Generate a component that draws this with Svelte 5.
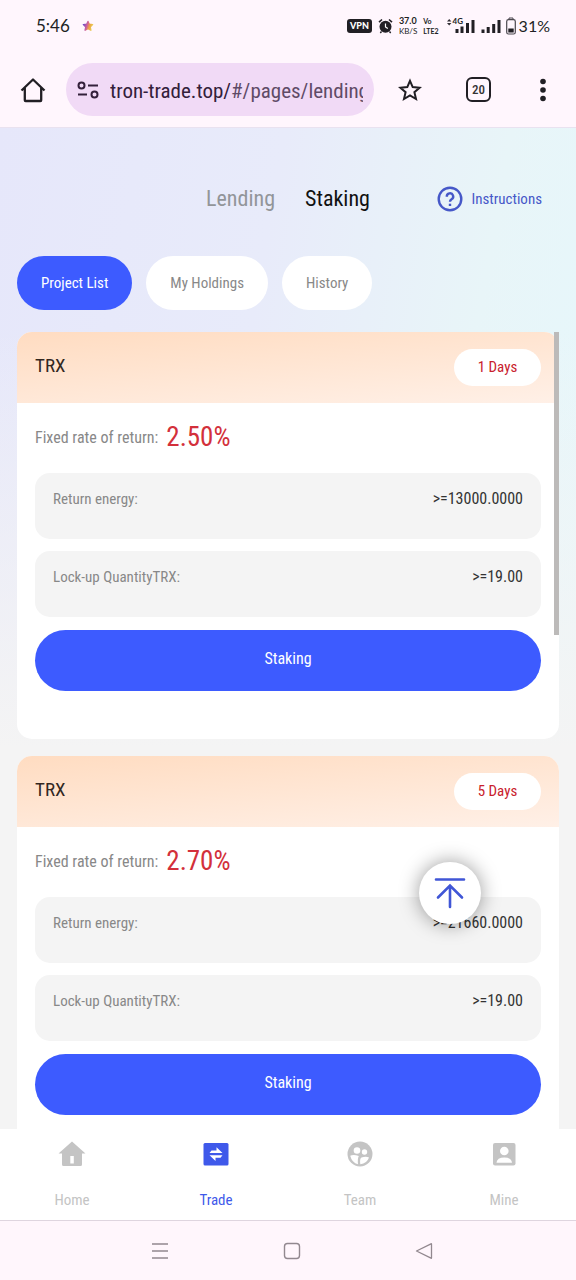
<script>
  const filters = ['Project List', 'My Holdings', 'History'];
  const projects = [
    { coin: 'TRX', days: 1, rate: '2.50%', energy: '13000.0000', quantity: '19.00' },
    { coin: 'TRX', days: 5, rate: '2.70%', energy: '21660.0000', quantity: '19.00' }
  ];
  const navigation = ['Home', 'Trade', 'Team', 'Mine'];
  let filter = $state('Project List');
  let page = $state('Trade');
  let list;
</script>

<div class="screen">
  <header class="browser">
    <div class="status">
      <span class="clock">5:46</span>
      <svg class="flower" width="12" height="12" viewBox="0 0 12 12" aria-hidden="true">
        <defs>
          <linearGradient id="petals" x1="0" y1=".3" x2="1" y2=".6">
            <stop offset="0" stop-color="#6f4bc6" /><stop offset=".4" stop-color="#d0609a" />
            <stop offset=".65" stop-color="#eda244" /><stop offset="1" stop-color="#e9d056" />
          </linearGradient>
        </defs>
        <path d="M6 1.500 7.300 4.300 10.600 4.600 8.200 6.900 8.900 10.200 6 8.600 3.100 10.200 3.800 6.900 1.400 4.600 4.700 4.300Z" fill="url(#petals)" stroke="url(#petals)" stroke-width="1.400" stroke-linejoin="round" />
      </svg>
      <div class="indicators">
        <span class="vpn">VPN</span>
        <svg class="alarm" width="15" height="16" viewBox="0 0 15 16" aria-hidden="true">
          <circle cx="7.5" cy="8.8" r="6" fill="#211f24" />
          <path d="M1 4.2 4 1.5M14 4.2 11 1.5" stroke="#211f24" stroke-width="1.6" />
          <path d="M7.5 5.5V9L9.8 10.6" fill="none" stroke="#fff" stroke-width="1.2" />
          <path d="M3.5 13.5 2.3 15M11.5 13.5 12.7 15" stroke="#211f24" stroke-width="1.4" />
        </svg>
        <span class="stack speed"><b>37.0</b><span>KB/S</span></span>
        <span class="stack volte"><b>Vo</b><b>LTE2</b></span>
        <span class="cell">
          <svg width="28" height="18" viewBox="0 0 28 18" aria-hidden="true">
            <path d="M0 4.500 2.2 2 4.400 4.500ZM0 6 2.200 8.500 4.400 6Z" fill="#332f36" />
            <path d="M10 16V12M15 16V9.500M20.500 16V6M26 16V3" stroke="#211f24" stroke-width="3" />
          </svg>
          <b>4G</b>
        </span>
        <svg class="bars" width="20" height="18" viewBox="0 0 20 18" aria-hidden="true">
          <path d="M2 16V12.500M7.200 16V10M12.700 16V7M18 16V3" stroke="#211f24" stroke-width="3" />
        </svg>
        <svg class="battery" width="10" height="18" viewBox="0 0 10 18" aria-hidden="true">
          <path d="M3 2.500V1H7V2.500" fill="none" stroke="#4b474e" />
          <rect x=".7" y="2.700" width="8.600" height="14.300" rx="1.800" fill="none" stroke="#4b474e" stroke-width="1.200" />
          <rect x="2.300" y="11.500" width="5.400" height="4" fill="#211f24" />
        </svg>
        <span class="percent">31%</span>
      </div>
    </div>
    <div class="toolbar">
      <button class="icon" aria-label="Home page">
        <svg width="26" height="26" viewBox="0 0 26 26" fill="none" stroke="#211f24" stroke-width="2.300">
          <path d="M1.500 13.500 13 2.500 24.500 13.500M4.800 11V23.200Q4.800 24 5.600 24H20.400Q21.200 24 21.200 23.200V11" stroke-linejoin="round" />
        </svg>
      </button>
      <div class="address">
        <svg width="22" height="18" viewBox="0 0 22 18" fill="none" stroke="#33203a" stroke-width="2" aria-hidden="true">
          <circle cx="4.500" cy="4.500" r="3" /><path d="M11 4.500H21M1 13.500H10" /><circle cx="17.500" cy="13.500" r="3" />
        </svg>
        <span class="url">tron-trade.top/<span>#/pages/lending</span></span>
      </div>
      <button class="icon" aria-label="Bookmark">
        <svg width="24" height="24" viewBox="0 0 24 24" fill="none" stroke="#211f24" stroke-width="2">
          <path d="M12 2.800 14.700 9.100 21.600 9.700 16.400 14.200 18 21 12 17.400 6 21 7.600 14.200 2.400 9.700 9.300 9.100Z" />
        </svg>
      </button>
      <button class="icon tabs-count" aria-label="20 open tabs"><span>20</span></button>
      <button class="icon" aria-label="Menu">
        <svg width="8" height="24" viewBox="0 0 8 24" fill="#211f24">
          <circle cx="4" cy="3.500" r="2.800" /><circle cx="4" cy="12" r="2.800" /><circle cx="4" cy="20.500" r="2.800" />
        </svg>
      </button>
    </div>
  </header>

  <main>
    <div class="heading">
      <nav class="sections" aria-label="Product">
        <a href="#lending">Lending</a>
        <a href="#staking" class="current">Staking</a>
      </nav>
      <a class="help" href="#instructions">
        <svg width="26" height="26" viewBox="0 0 26 26" fill="none" stroke="#4658c8" stroke-width="2.400" aria-hidden="true">
          <circle cx="13" cy="13" r="11.300" />
          <path d="M9.800 10.700A3.200 3.200 0 1 1 14.600 13.300Q13 14.300 13 15.700" /><path d="M13 17.700V20" />
        </svg>
        Instructions
      </a>
    </div>

    <div class="filters">
      {#each filters as name}
        <button class:active={filter === name} onclick={() => (filter = name)}>{name}</button>
      {/each}
    </div>

    <div class="viewport">
      <div class="list" bind:this={list}>
        {#each projects as project}
          <article>
            <div class="card-head">
              <h2>{project.coin}</h2>
              <span class="days">{project.days} Days</span>
            </div>
            <div class="card-body">
              <p class="rate">Fixed rate of return: <strong>{project.rate}</strong></p>
              <dl>
                <div><dt>Return energy:</dt><dd>&gt;={project.energy}</dd></div>
                <div><dt>Lock-up QuantityTRX:</dt><dd>&gt;={project.quantity}</dd></div>
              </dl>
              <button class="stake">Staking</button>
            </div>
          </article>
        {/each}
      </div>
      <div class="scrollbar"></div>
    </div>

    <button class="to-top" aria-label="Back to top" onclick={() => list.scrollTo({ top: 0 })}>
      <svg width="32" height="32" viewBox="0 0 32 32" fill="none" stroke="#4056d6" stroke-width="2.600" stroke-linecap="round">
        <path d="M2 2.500H30M16 30V8.500M4 20.500 16 8.500 28 20.500" />
      </svg>
    </button>
  </main>

  <nav class="bottom" aria-label="Main">
    {#each navigation as name}
      <a href={'#' + name.toLowerCase()} class:current={page === name} onclick={() => (page = name)}>
        <svg width="28" height="28" viewBox="0 0 28 28" fill="currentColor" aria-hidden="true">
          {#if name === 'Home'}
            <path fill-rule="evenodd" d="M14 1.500 27.500 13.500H24V24.500Q24 26 22.500 26H5.500Q4 26 4 24.500V13.500H.5ZM12.300 16V23.500H15.800V16Z" />
          {:else if name === 'Trade'}
            <rect x="1.500" y="3" width="25" height="22.500" rx="1.500" />
            <path d="M7.500 12.900H20.500L14.500 7.300V10.500H9.500ZM20.500 15.300H7.500L13.500 21V17.700H18.500Z" fill="#fff" />
          {:else if name === 'Team'}
            <circle cx="14" cy="14" r="12.500" />
            <circle cx="11" cy="10.500" r="3.300" fill="#fff" /><circle cx="18.500" cy="12" r="2.700" fill="#fff" />
            <path d="M4.200 15.800Q7.500 14.200 12.800 16Q11.400 18.500 12 24.200Q6 23 4.200 15.800ZM14.300 24.200Q13.500 18.500 15.500 17.500Q20 15.800 23 17.500Q21 23.500 14.300 24.200Z" fill="#fff" />
          {:else}
            <rect x="3" y="3" width="22.500" height="22.500" rx="2" />
            <circle cx="14.300" cy="11" r="4.300" fill="#fff" />
            <path d="M6.500 22.800Q7 17.500 14.300 17.500Q21.500 17.500 22 22.800Z" fill="#fff" />
          {/if}
        </svg>
        <span>{name}</span>
      </a>
    {/each}
  </nav>

  <footer>
    <button aria-label="Recent apps">
      <svg width="18" height="18" viewBox="0 0 18 18" fill="none" stroke="#92888f" stroke-width="1.500"><path d="M1 2H17M1 9H17M1 16H17" /></svg>
    </button>
    <button aria-label="Home screen">
      <svg width="18" height="18" viewBox="0 0 18 18" fill="none" stroke="#92888f" stroke-width="1.400"><rect x="1.500" y="1.500" width="15" height="15" rx="3" /></svg>
    </button>
    <button aria-label="Back">
      <svg width="18" height="18" viewBox="0 0 18 18" fill="none" stroke="#92888f" stroke-width="1.300" stroke-linejoin="round"><path d="M1.500 9 16 1.800Q16.500 1.600 16.500 2.300V15.700Q16.500 16.400 16 16.200Z" /></svg>
    </button>
  </footer>
</div>

<style>
  :global(body) { margin: 0; }
  .screen {
    display: flex;
    flex-direction: column;
    height: 100vh;
    font-family: "Roboto Condensed", "Liberation Sans Narrow", "DejaVu Sans Condensed", sans-serif;
    font-size: 15px;
    line-height: 20px;
    color: #333;
  }
  button { font: inherit; border: 0; padding: 0; margin: 0; background: none; color: inherit; cursor: pointer; }
  a { color: inherit; text-decoration: none; }
  svg { display: block; flex: none; }

  .browser { background: #fff6fd; border-bottom: 1px solid #e9e2f0; }
  .status {
    display: flex;
    align-items: center;
    height: 52px;
    padding: 0 26px 0 36px;
    color: #211f24;
    font-family: Lato, sans-serif;
  }
  .clock { font-size: 17px; }
  .flower { margin-left: 12px; }
  .indicators { display: flex; align-items: center; gap: 6px; margin-left: auto; }
  .vpn { padding: 0 3px; border-radius: 3px; background: #211f24; color: #fff; font-size: 9px; font-weight: 900; line-height: 14px; }
  .stack { display: flex; flex-direction: column; font-size: 8px; line-height: 10px; }
  .volte { font-size: 7px; }
  .speed b { font-size: 9px; }
  .cell { position: relative; margin-left: 2px; }
  .cell b { position: absolute; left: 6px; top: 0; font-size: 8px; line-height: 9px; }
  .battery { margin-left: -1px; }
  .percent { font-size: 16px; margin-left: -3px; }

  .toolbar { display: flex; align-items: center; height: 75px; padding: 0 29px 0 20px; }
  .icon { flex: none; margin-left: 24px; }
  .icon:first-child { margin-left: 0; }
  .address {
    display: flex;
    flex: 1;
    align-items: center;
    gap: 11px;
    min-width: 0;
    height: 53px;
    margin-left: 20px;
    padding: 0 11px;
    border-radius: 27px;
    background: #f1daf6;
    box-sizing: border-box;
  }
  .url { flex: 1; overflow: hidden; padding-top: 3px; white-space: nowrap; font-size: 21px; line-height: 30px; color: #33203a; }
  .url span { color: #5f4b66; }
  .tabs-count {
    width: 25px;
    height: 25px;
    margin: 0 24px 0 44px;
    border: 2px solid #211f24;
    border-radius: 6px;
    box-sizing: border-box;
    font-size: 13px;
    font-weight: 500;
    line-height: 20px;
  }

  main {
    position: relative;
    display: flex;
    flex: 1;
    flex-direction: column;
    min-height: 0;
    padding: 0 17px;
    background:
      linear-gradient(180deg, rgba(244, 244, 244, 0) 20%, #f4f4f4 62%),
      linear-gradient(100deg, #e6e7fa 0%, #e8ebfa 38%, #e8f5f8 68%, #e5f8fd 100%);
  }
  .heading { display: grid; grid-template-columns: 1fr auto 1fr; align-items: center; height: 128px; padding: 14px 17px 0; box-sizing: border-box; }
  .sections { grid-column: 2; display: flex; gap: 30px; font-size: 22px; line-height: 32px; color: #929599; }
  .sections .current { color: #111; }
  .help { display: flex; align-items: center; justify-self: end; gap: 8px; color: #4658c8; }

  .filters { display: flex; gap: 14px; }
  .filters button { height: 54px; padding: 0 24px; border-radius: 27px; background: #fff; color: #888; }
  .filters .active { background: #3d5bff; color: #fff; }

  .viewport { position: relative; flex: 1; min-height: 0; margin-top: 22px; }
  .list { height: 100%; overflow-y: auto; scrollbar-width: none; }
  .scrollbar { position: absolute; top: 0; right: 0; width: 5px; height: 38%; background: #bcbab9; }
  article { margin-bottom: 17px; padding-bottom: 48px; border-radius: 15px; background: #fff; overflow: hidden; }
  .card-head { display: flex; align-items: center; justify-content: space-between; height: 71px; padding: 0 18px; background: linear-gradient(175deg, #ffdcc1, #fff0e7); }
  h2 { margin: 0; padding-bottom: 3px; font-size: 19px; font-weight: 400; line-height: 24px; color: #33271f; }
  .days { min-width: 87px; border-radius: 19px; background: #fff; color: #c9212d; line-height: 37px; text-align: center; }
  .card-body { padding: 0 18px; }
  .rate { display: flex; align-items: center; gap: 8px; height: 70px; margin: 0; font-size: 16px; color: #888; }
  .rate strong { padding-bottom: 3px; font-size: 27px; font-weight: 400; color: #d3303b; }
  dl { display: grid; gap: 12px; margin: 0 0 13px; }
  dl div { display: flex; justify-content: space-between; height: 50px; padding: 16px 18px 0; border-radius: 15px; background: #f4f4f4; }
  dt { color: #888; }
  dd { margin: 0; font-size: 16px; }
  .stake { display: block; width: 100%; height: 61px; padding-bottom: 3px; border-radius: 31px; background: #3d5bff; color: #fff; font-size: 16px; }
  .to-top {
    position: absolute;
    right: 95px;
    bottom: 205px;
    display: grid;
    place-items: center;
    width: 62px;
    height: 62px;
    border-radius: 50%;
    background: #fff;
    box-shadow: 0 0 20px rgba(0, 0, 0, .4);
  }

  .bottom { display: grid; grid-template-columns: repeat(4, 1fr); height: 91px; background: #fff; color: #c4c4c4; }
  .bottom a { display: flex; flex-direction: column; align-items: center; gap: 22px; padding-top: 11px; }
  .bottom .current { color: #3f59ea; }

  footer { display: flex; justify-content: center; gap: 114px; height: 60px; padding-left: 8px; box-sizing: border-box; border-top: 1px solid #dfd5df; background: #fff6fc; }
</style>
